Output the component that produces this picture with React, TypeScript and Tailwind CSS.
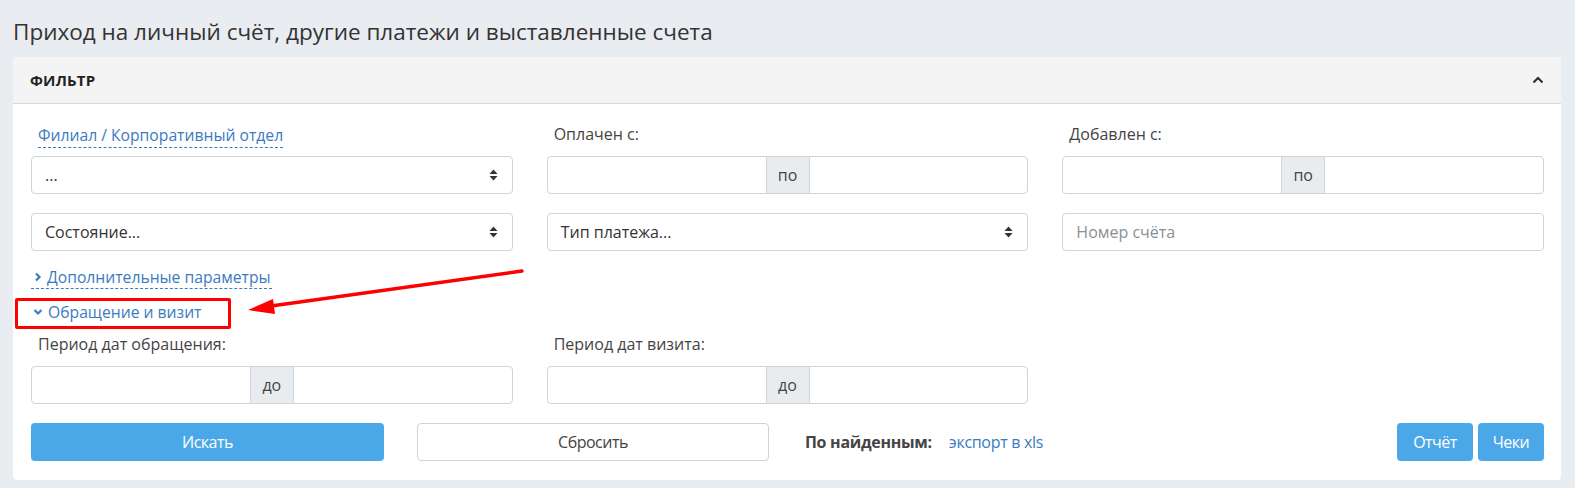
import React from "react";

const font = { fontFamily: '"Open Sans", "Liberation Sans", sans-serif' };

function SortIcon() {
  return (
    <svg width="9" height="12" viewBox="0 0 9 12" className="shrink-0">
      <path d="M4.5 0.5 L8.5 5 L0.5 5 Z" fill="#333" />
      <path d="M4.5 11.5 L8.5 7 L0.5 7 Z" fill="#333" />
    </svg>
  );
}

function Select({ text }: { text: string }) {
  return (
    <div className="h-[38px] w-full flex items-center justify-between pl-[13px] pr-[14px] border border-[#ced4da] rounded-[4px] bg-white text-[16px] text-[#333]">
      <span>{text}</span>
      <SortIcon />
    </div>
  );
}

function RangeInput({ addon }: { addon: string }) {
  return (
    <div className="h-[38px] w-full flex border border-[#ced4da] rounded-[4px] bg-white">
      <div className="flex-1" />
      <div className="w-[44px] flex items-center justify-center bg-[#e9ecef] border-x border-[#ced4da] text-[16px] text-[#444]">
        {addon}
      </div>
      <div className="flex-1" />
    </div>
  );
}

function Label({ text }: { text: string }) {
  return <div className="h-[22px] pl-[7px] text-[16px] leading-[22px] text-[#444]">{text}</div>;
}

function ChevronRight() {
  return (
    <svg width="8" height="10" viewBox="0 0 8 10" className="shrink-0">
      <path d="M2 1.5 L5.5 5 L2 8.5" stroke="#3a7bbf" strokeWidth="2.2" fill="none" />
    </svg>
  );
}

function ChevronDown() {
  return (
    <svg width="10" height="8" viewBox="0 0 10 8" className="shrink-0">
      <path d="M1.5 2 L5 5.5 L8.5 2" stroke="#3a7bbf" strokeWidth="2.2" fill="none" />
    </svg>
  );
}

export default function App() {
  return (
    <div className="w-[1575px] h-[488px] bg-[#e9ecf0] overflow-hidden" style={font}>
      <h1 className="pl-[13px] pt-[16px] h-[57px] text-[22.5px] leading-[32px] text-[#333]">
        Приход на личный счёт, другие платежи и выставленные счета
      </h1>

      <div className="relative ml-[13px] w-[1548px] h-[423px] bg-white rounded-[4px]">
        <div className="h-[47px] flex items-center justify-between pl-[17px] pr-[17px] bg-[#f4f4f4] border-b border-[#d8d8d8] rounded-t-[4px]">
          <span className="text-[15px] font-bold text-[#222] tracking-[0.2px]">ФИЛЬТР</span>
          <svg width="12" height="8" viewBox="0 0 12 8">
            <path d="M1.5 6.5 L6 2 L10.5 6.5" stroke="#1f2d3d" strokeWidth="2" fill="none" />
          </svg>
        </div>

        <div className="pl-[18px] pr-[17px] pt-[19px]">
          <div className="grid grid-cols-3 gap-x-[34px] w-[1513px]">
            <div className="flex flex-col">
              <div className="h-[25px] pl-[7px]">
                <span className="text-[15.7px] leading-[22px] text-[#3a7bbf] border-b border-dashed border-[#3a7bbf] pb-[1px]">
                  Филиал / Корпоративный отдел
                </span>
              </div>
              <div className="mt-[8px]">
                <Select text="..." />
              </div>
              <div className="mt-[19px]">
                <Select text="Состояние..." />
              </div>
            </div>
            <div className="flex flex-col">
              <Label text="Оплачен с:" />
              <div className="mt-[11px]">
                <RangeInput addon="по" />
              </div>
              <div className="mt-[19px]">
                <Select text="Тип платежа..." />
              </div>
            </div>
            <div className="flex flex-col">
              <Label text="Добавлен с:" />
              <div className="mt-[11px]">
                <RangeInput addon="по" />
              </div>
              <div className="mt-[19px] h-[38px] flex items-center pl-[13px] border border-[#ced4da] rounded-[4px] text-[16px] text-[#8a8f95]">
                Номер счёта
              </div>
            </div>
          </div>

          <div className="mt-[14px] h-[24px] flex">
            <div className="flex items-center gap-[5px] border-b border-dashed border-[#3a7bbf] pl-[3px] pr-[1px]">
              <ChevronRight />
              <span className="text-[15.7px] leading-[22px] text-[#3a7bbf]">Дополнительные параметры</span>
            </div>
          </div>

          <div className="mt-[11px] h-[24px] flex items-center gap-[5px] pl-[2px]">
            <ChevronDown />
            <span className="text-[15.7px] leading-[22px] text-[#3a7bbf]">Обращение и визит</span>
          </div>

          <div className="mt-[9px] grid grid-cols-3 gap-x-[34px] w-[1513px]">
            <div className="flex flex-col">
              <Label text="Период дат обращения:" />
              <div className="mt-[11px]">
                <RangeInput addon="до" />
              </div>
            </div>
            <div className="flex flex-col">
              <Label text="Период дат визита:" />
              <div className="mt-[11px]">
                <RangeInput addon="до" />
              </div>
            </div>
          </div>

          <div className="mt-[19px] flex items-center w-[1513px]">
            <button className="w-[353px] h-[38px] bg-[#4aa8e8] rounded-[4px] text-white text-[16px] tracking-[-0.5px]">
              Искать
            </button>
            <button className="ml-[33px] w-[352px] h-[38px] bg-white border border-[#cfd3d7] rounded-[4px] text-[#444] text-[16px] tracking-[-0.5px]">
              Сбросить
            </button>
            <span className="ml-[36px] text-[16px] font-bold text-[#444] tracking-[-0.3px]">По найденным:</span>
            <span className="ml-[17px] text-[16px] text-[#3a7bbf] tracking-[-0.3px]">экспорт в xls</span>
            <div className="ml-auto flex gap-[5px]">
              <button className="w-[76px] h-[38px] bg-[#4aa8e8] rounded-[4px] text-white text-[16px] tracking-[-0.5px]">
                Отчёт
              </button>
              <button className="w-[66px] h-[38px] bg-[#4aa8e8] rounded-[4px] text-white text-[16px] tracking-[-0.5px]">
                Чеки
              </button>
            </div>
          </div>
        </div>

        <div className="absolute left-[2px] top-[241px] w-[216px] h-[31px] border-[3px] border-[#ff0000] rounded-[2px]" />
        <svg className="absolute left-0 top-0 pointer-events-none" width="1548" height="423">
          <line x1="509" y1="214" x2="258" y2="249" stroke="#ff0000" strokeWidth="3.5" strokeLinecap="round" />
          <path d="M235 253 L260 242 L262 257 Z" fill="#ff0000" />
        </svg>
      </div>
    </div>
  );
}
